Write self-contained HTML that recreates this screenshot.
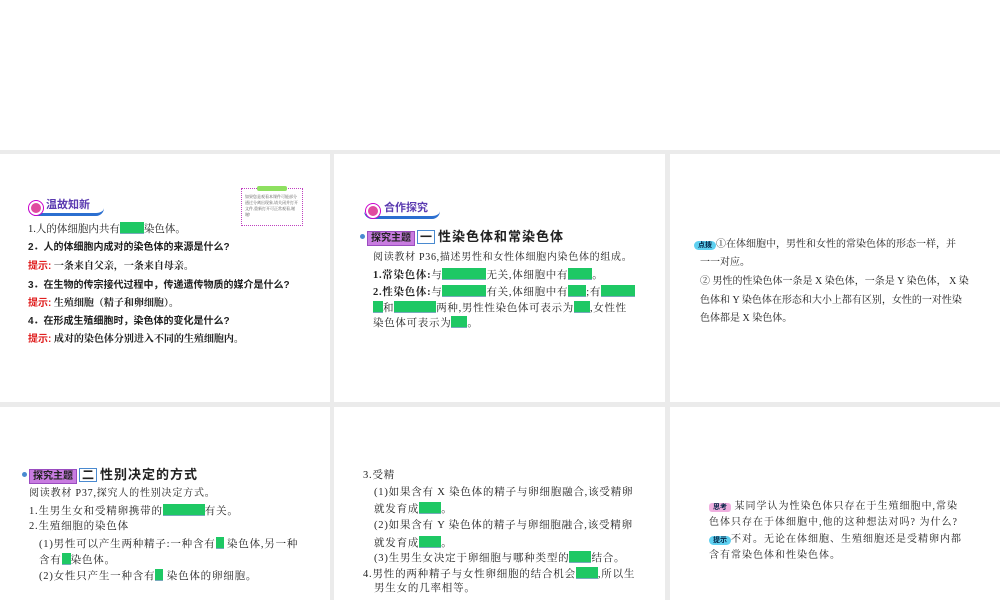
<!DOCTYPE html>
<html><head><meta charset="utf-8"><style>
*{margin:0;padding:0;box-sizing:border-box}
body{width:1000px;height:600px;background:#ebebeb;position:relative;overflow:hidden;font-family:"Liberation Serif","Noto Serif CJK SC",serif;color:#222}
.p{position:absolute;background:#fff}
.l{position:absolute;white-space:nowrap;font-size:10.5px;line-height:14px}
.b{font-family:"Liberation Sans","Noto Sans CJK SC",sans-serif;font-weight:bold}
.r{color:#e02020;font-family:"Liberation Sans","Noto Sans CJK SC",sans-serif;font-weight:bold}
.g{display:inline-block;background:#1ec864;height:12px;vertical-align:-2px;border-bottom:1px solid #7ab}
.badge{position:absolute;height:14px;border-radius:0 0 8px 8px;border-bottom:3px solid #2b6fd0}
.tag{display:inline-block;background:#c87ce0;border:1px solid #9a4cc0;color:#222;font-size:10px;padding:0 3px;line-height:13px;font-family:"Liberation Sans","Noto Sans CJK SC",sans-serif;font-weight:bold;letter-spacing:0}
.num{display:inline-block;border:1.5px solid #4a8ad0;font-size:12px;line-height:12px;padding:0 2px;margin:0 3px 0 2px;font-family:"Liberation Sans","Noto Sans CJK SC",sans-serif;font-weight:bold;letter-spacing:0}
.tt{font-size:13px;font-family:"Liberation Sans","Noto Sans CJK SC",sans-serif;font-weight:bold;letter-spacing:1px}
.dot{display:inline-block;width:5px;height:5px;border-radius:50%;background:#4a8ad0;margin-right:2px;vertical-align:2px}
.pill{display:inline-block;background:#5fd0f0;border-radius:7px;font-size:7px;padding:0 4px;line-height:9px;color:#024;font-weight:bold;font-family:"Liberation Sans","Noto Sans CJK SC",sans-serif;letter-spacing:0}
.s2 .l{letter-spacing:0.7px}
.s4 .l,.s5 .l{letter-spacing:0.8px}
.s6 .l{letter-spacing:1px}
</style></head><body>
<div class="p" style="left:0;top:0;width:1000px;height:150px"></div>
<div class="p" style="left:0;top:154px;width:330px;height:248px"></div>
<div class="p" style="left:334px;top:154px;width:331px;height:248px"></div>
<div class="p" style="left:670px;top:154px;width:330px;height:248px"></div>
<div class="p" style="left:0;top:407px;width:330px;height:193px"></div>
<div class="p" style="left:334px;top:407px;width:331px;height:193px"></div>
<div class="p" style="left:670px;top:407px;width:330px;height:193px"></div>

<!-- panel 1 -->
<div class="badge" style="left:28px;top:202px;width:76px"></div>
<div style="position:absolute;left:29px;top:201px;width:14px;height:14px;border-radius:50%;background:#e04aa0;border:2px solid #fff;box-shadow:0 0 0 1px #c0c"></div>
<div class="l b" style="left:46px;top:198px;color:#5a3ab0;font-size:11px">温故知新</div>
<div style="position:absolute;left:241px;top:188px;width:62px;height:38px;border:1px dotted #c040c0;font-size:4px;line-height:6px;color:#555;padding:5px 3px 0;overflow:hidden">如果您是观看本课件可能部分通过分离出现象,请关闭并打开文件,重新打开可正常观看,谢谢!</div>
<div style="position:absolute;left:257px;top:186px;width:30px;height:5px;background:#8ee060;border-radius:2px"></div>
<div class="l" style="left:28px;top:222px">1.人的体细胞内共有<span class="g" style="width:24px"></span>染色体。</div>
<div class="l b" style="left:28px;top:241px;font-size:10px">2．人的体细胞内成对的染色体的来源是什么?</div>
<div class="l" style="left:28px;top:260px;font-size:10px"><span class="r">提示:</span> <b>一条来自父亲，一条来自母亲。</b></div>
<div class="l b" style="left:28px;top:279px;font-size:10px">3．在生物的传宗接代过程中，传递遗传物质的媒介是什么?</div>
<div class="l" style="left:28px;top:297px;font-size:10px"><span class="r">提示:</span> <b>生殖细胞（精子和卵细胞）。</b></div>
<div class="l b" style="left:28px;top:315px;font-size:10px">4．在形成生殖细胞时，染色体的变化是什么?</div>
<div class="l" style="left:28px;top:333px;font-size:10px"><span class="r">提示:</span> <b>成对的染色体分别进入不同的生殖细胞内。</b></div>

<!-- panel 2 -->
<div class="s2">
<div class="badge" style="left:364px;top:205px;width:76px"></div>
<div style="position:absolute;left:366px;top:204px;width:14px;height:14px;border-radius:50%;background:#e04aa0;border:2px solid #fff;box-shadow:0 0 0 1px #c0c"></div>
<div class="l b" style="left:384px;top:201px;color:#5a3ab0;font-size:11px;letter-spacing:0">合作探究</div>
<div class="l" style="left:360px;top:229px;line-height:16px;letter-spacing:0"><span class="dot"></span><span class="tag">探究主题</span><span class="num">一</span><span class="tt">性染色体和常染色体</span></div>
<div class="l" style="left:335px;top:251px;font-size:10px;left:373px">阅读教材 P36,描述男性和女性体细胞内染色体的组成。</div>
<div class="l" style="left:373px;top:268px"><b>1.常染色体:</b>与<span class="g" style="width:44px"></span>无关,体细胞中有<span class="g" style="width:24px"></span>。</div>
<div class="l" style="left:373px;top:285px"><b>2.性染色体:</b>与<span class="g" style="width:44px"></span>有关,体细胞中有<span class="g" style="width:18px"></span>;有<span class="g" style="width:34px"></span></div>
<div class="l" style="left:373px;top:301px"><span class="g" style="width:10px"></span>和<span class="g" style="width:42px"></span>两种,男性性染色体可表示为<span class="g" style="width:16px"></span>,女性性</div>
<div class="l" style="left:373px;top:316px">染色体可表示为<span class="g" style="width:16px"></span>。</div>
</div>

<!-- panel 3 -->
<div class="l" style="left:694px;top:238px;font-size:10px"><span class="pill">点拨</span>①在体细胞中，男性和女性的常染色体的形态一样，并</div>
<div class="l" style="left:700px;top:256px;font-size:10px">一一对应。</div>
<div class="l" style="left:700px;top:275px;font-size:10px">② 男性的性染色体一条是 X 染色体，一条是 Y 染色体， X 染</div>
<div class="l" style="left:700px;top:294px;font-size:10px">色体和 Y 染色体在形态和大小上都有区别，女性的一对性染</div>
<div class="l" style="left:700px;top:312px;font-size:10px">色体都是 X 染色体。</div>

<!-- panel 4 -->
<div class="s4">
<div class="l" style="left:22px;top:467px;line-height:16px;letter-spacing:0"><span class="dot"></span><span class="tag">探究主题</span><span class="num">二</span><span class="tt">性别决定的方式</span></div>
<div class="l" style="left:29px;top:487px;font-size:10px">阅读教材 P37,探究人的性别决定方式。</div>
<div class="l" style="left:29px;top:504px">1.生男生女和受精卵携带的<span class="g" style="width:42px"></span>有关。</div>
<div class="l" style="left:29px;top:520px">2.生殖细胞的染色体</div>
<div class="l" style="left:39px;top:537px">(1)男性可以产生两种精子:一种含有<span class="g" style="width:8px"></span> 染色体,另一种</div>
<div class="l" style="left:39px;top:553px">含有<span class="g" style="width:9px"></span>染色体。</div>
<div class="l" style="left:39px;top:569px">(2)女性只产生一种含有<span class="g" style="width:8px"></span> 染色体的卵细胞。</div>
</div>

<!-- panel 5 -->
<div class="s5">
<div class="l" style="left:363px;top:469px">3.受精</div>
<div class="l" style="left:374px;top:486px">(1)如果含有 X 染色体的精子与卵细胞融合,该受精卵</div>
<div class="l" style="left:374px;top:502px">就发育成<span class="g" style="width:22px"></span>。</div>
<div class="l" style="left:374px;top:519px">(2)如果含有 Y 染色体的精子与卵细胞融合,该受精卵</div>
<div class="l" style="left:374px;top:536px">就发育成<span class="g" style="width:22px"></span>。</div>
<div class="l" style="left:374px;top:551px">(3)生男生女决定于卵细胞与哪种类型的<span class="g" style="width:22px"></span>结合。</div>
<div class="l" style="left:363px;top:567px">4.男性的两种精子与女性卵细胞的结合机会<span class="g" style="width:22px"></span>,所以生</div>
<div class="l" style="left:374px;top:582px">男生女的几率相等。</div>
</div>

<!-- panel 6 -->
<div class="s6">
<div class="l" style="left:709px;top:500px;font-size:10px"><span class="pill" style="background:#f0b0e0;border-radius:3px">思考</span> 某同学认为性染色体只存在于生殖细胞中,常染</div>
<div class="l" style="left:709px;top:516px;font-size:10px">色体只存在于体细胞中,他的这种想法对吗? 为什么?</div>
<div class="l" style="left:709px;top:533px;font-size:10px"><span class="pill">提示</span>不对。无论在体细胞、生殖细胞还是受精卵内都</div>
<div class="l" style="left:709px;top:549px;font-size:10px">含有常染色体和性染色体。</div>
</div>
</body></html>
